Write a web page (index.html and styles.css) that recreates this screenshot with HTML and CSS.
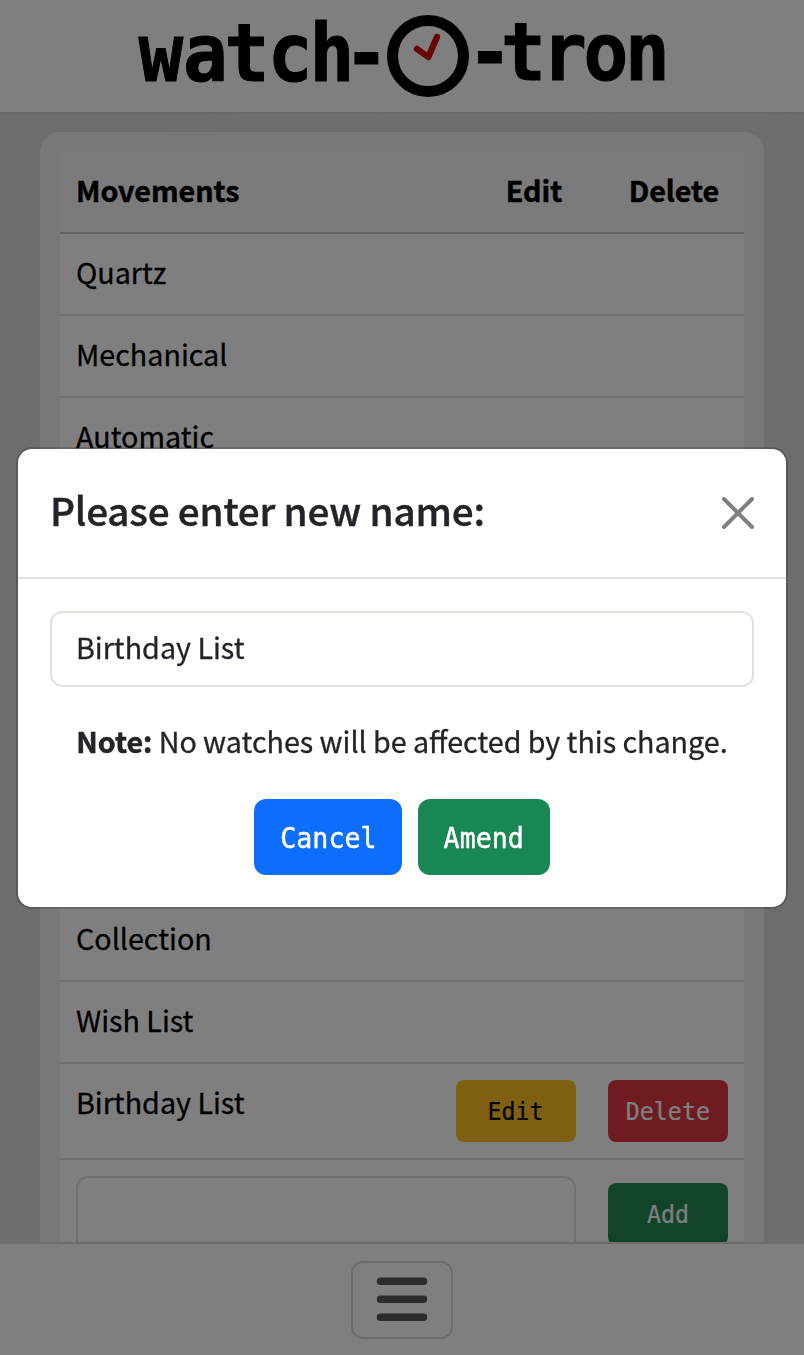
FILE: index.html
```html
<!DOCTYPE html>
<html lang="en">
<head>
<meta charset="utf-8">
<title>watch-O-tron</title>
<link rel="stylesheet" href="styles.css">
</head>
<body>
<div class="page">
  <header class="topbar">
    <svg class="logo" width="804" height="112" viewBox="0 0 804 112">
      <text class="logo-text" transform="translate(0 80.5) scale(.93 1)" x="173.1 221 265.6 312 357 394.1" y="0">watch-</text>
      <circle cx="428" cy="56" r="35.5" fill="none" stroke="#000" stroke-width="11"/>
      <path d="M417 49L428.3 57L437 37" fill="none" stroke="#d20c0c" stroke-width="6.4" stroke-linecap="round" stroke-linejoin="round"/>
      <text class="logo-text" transform="translate(0 80) scale(.93 1)" x="526.9 562.9 607 651.6 696.2" y="0">-tron</text>
    </svg>
  </header>
  <main class="content">
    <section class="card">
      <div class="row head"><span>Movements</span><span class="h-edit">Edit</span><span class="h-delete">Delete</span></div>
      <div class="row">Quartz</div>
      <div class="row">Mechanical</div>
      <div class="row">Automatic</div>
      <div class="row spacer"></div>
      <div class="row">Collection</div>
      <div class="row">Wish List</div>
      <div class="row actions"><span class="name">Birthday List</span><button class="btn small warning"><span>Edit</span></button><button class="btn small danger"><span>Delete</span></button></div>
      <div class="row entry"><div class="field"></div><button class="btn small success"><span>Add</span></button></div>
    </section>
  </main>
  <footer class="bottombar">
    <button class="toggler">
      <svg width="60" height="60" viewBox="0 0 60 60"><path d="M8.5 11.3h43M8.5 29.3h43M8.5 47.3h43" fill="none" stroke="#585858" stroke-width="7.5" stroke-linecap="round"/></svg>
    </button>
  </footer>
</div>
<div class="backdrop">
  <div class="modal">
    <div class="modal-header">
      <h1 class="title">Please enter new name:</h1>
      <svg class="close" width="32" height="32" viewBox="0 0 32 32"><path d="M2 2L30 30M30 2L2 30" stroke="#808080" stroke-width="4" stroke-linecap="round"/></svg>
    </div>
    <div class="modal-body">
      <div class="field filled">Birthday List</div>
      <p class="note"><b>Note:</b> No watches will be affected by this change.</p>
      <div class="buttons"><button class="btn primary"><span>Cancel</span></button><button class="btn success amend"><span>Amend</span></button></div>
    </div>
  </div>
</div>
</body>
</html>
```
FILE: styles.css
```css
* { box-sizing: border-box; }
body {
  margin: 0;
  overflow: hidden;
  font-family: "Noto Sans CJK SC", "Noto Sans", sans-serif;
  font-size: 28.7px;
  line-height: 48px;
  color: #212529;
  -webkit-text-stroke: .3px;
}
.page { display: flex; flex-direction: column; width: 804px; height: 1355px; color: #000; }
.topbar { flex: none; height: 114px; background: #fff; border-bottom: 2px solid #d2d2d2; }
.logo { display: block; }
.logo-text { font: bold 80px "DejaVu Sans Mono", monospace; text-anchor: middle; stroke: #000; stroke-width: 1px; }
.content { flex: 1; min-height: 0; overflow: hidden; padding: 18px 40px 0; background: linear-gradient(100deg, #dadada, #dedede 50%, #dadada); }
.card { padding: 20px; border-radius: 20px; background: #f0f0f0; }
.row { height: 82px; padding: 14px 16px 16px; background: #fff; border-bottom: 2px solid #dee2e6; }
.head { display: grid; grid-template-columns: 1fr 140px 140px; padding-right: 0; font-weight: bold; background: #f7f7f7; border-color: #c4c4c4; -webkit-text-stroke: .5px; letter-spacing: -.05px; }
.h-edit, .h-delete { text-align: center; }
.spacer { height: 420px; }
.actions, .entry { display: flex; gap: 32px; height: 96px; }
.actions .btn { margin-top: 2px; }
.name { flex: 1; }
.entry { height: 110px; }
.entry .field { width: 500px; margin-top: 2px; }
.entry .btn { margin-top: 9px; }
.field { height: 76px; padding: 10px 24px; border: 2px solid #dee2e6; border-radius: 12px; background: #fff; }
.btn { display: flex; flex: none; align-items: center; justify-content: center; width: 148px; height: 76px; padding: 2px 0 0; border: 0; border-radius: 12px; color: #fff; font: 29px/48px "DejaVu Sans Mono", monospace; -webkit-text-stroke: .5px; }
.btn span { transform: scaleX(.917); }
.small { width: 120px; height: 62px; padding: 0; border-radius: 8px; font-size: 25.4px; -webkit-text-stroke: .2px; }
.warning { color: #000; background: #ffc120; }
.danger { background: #dc3845; }
.success { background: #198754; }
.small.success { background: #248854; }
.primary { background: #0d6efd; }
.amend { width: 132px; }
.bottombar { display: flex; flex: none; justify-content: center; height: 113px; padding-top: 17px; background: #fff; border-top: 2px solid #d8d8d8; }
.toggler { display: flex; align-items: center; justify-content: center; width: 102px; height: 78px; padding: 0; border: 2px solid #dadada; border-radius: 12px; background: #fff; }
.backdrop { position: fixed; inset: 0; display: flex; align-items: center; justify-content: center; background: rgba(0, 0, 0, .5); }
.modal { width: 772px; height: 462px; border: 2px solid rgba(0, 0, 0, .175); border-radius: 16px; background: #fff; background-clip: padding-box; }
.modal-header { display: flex; align-items: center; justify-content: space-between; height: 130px; padding: 0 32px; border-bottom: 2px solid #dee2e6; }
.title { margin: 0; padding-bottom: 8px; font-size: 38.7px; font-weight: 500; line-height: 60px; letter-spacing: -.22px; -webkit-text-stroke: .4px; }
.modal-body { padding: 32px; }
.note { margin: 30px 0 34px; text-align: center; white-space: nowrap; word-spacing: -.15px; }
.note b { -webkit-text-stroke: .5px; }
.buttons { display: flex; justify-content: center; gap: 16px; }
```
